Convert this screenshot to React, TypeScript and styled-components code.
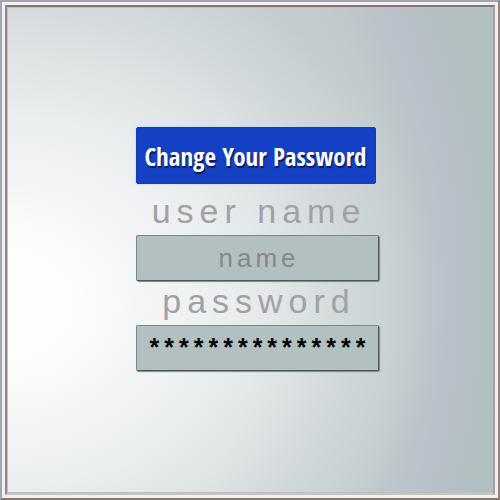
import React from "react";
import styled, { createGlobalStyle } from "styled-components";

const GlobalStyle = createGlobalStyle`
  * { box-sizing: border-box; }
  body { margin: 0; font-family: "Liberation Sans", Arial, sans-serif; }
`;

const Frame = styled.main`
  min-height: 100vh;
  display: flex;
  border: 2px solid;
  border-color: #a3a5b0 #94867f #85776f #a3a5b0;
  background: #f4efed;
  padding: 3px;
`;

const Panel = styled.div`
  flex: 1;
  display: flex;
  align-items: center;
  justify-content: center;
  padding: 0 0 2px 14px;
  border: 2px solid;
  border-color: #85786f #a0a2aa #c8c4c6 #91888a;
  box-shadow: inset 0 0 0 1px #b9c0c4;
  background:
    radial-gradient(
      ellipse 90% 76% at 0 61%,
      #ffffff 0%,
      rgba(255, 255, 255, 0.96) 14%,
      rgba(255, 255, 255, 0.62) 50%,
      rgba(255, 255, 255, 0.2) 80%,
      rgba(255, 255, 255, 0) 100%
    ),
    radial-gradient(
      ellipse 104% 130% at 0 58%,
      #cbd3d5 0%,
      #cad2d4 50%,
      #c2cbcc 76%,
      #b9c1ca 87%,
      #b2bfc1 98%
    );
`;

const Form = styled.form`
  width: 100%;
  max-width: 243px;
  display: flex;
  flex-direction: column;
`;

const TitleButton = styled.button`
  height: 57px;
  margin: 0 3px 7px 0;
  padding: 0;
  border: 1px solid #1a3bb0;
  border-radius: 2px;
  background: #1440c3;
  box-shadow: 0 0 3px #c3cdec;
  color: #ffffff;
  font: bold 25px "Open Sans Condensed", "Roboto Condensed", "Liberation Sans", sans-serif;
  text-shadow: 1px 2px 1px #0a1a55;
  white-space: nowrap;
`;

const Label = styled.label`
  padding-bottom: 3px;
  color: #a2a1a5;
  font-size: 34px;
  line-height: 41px;
  letter-spacing: 6px;
  text-indent: 4px;
  text-align: center;
  white-space: nowrap;
`;

const Field = styled.input<{ $masked?: boolean }>`
  width: 100%;
  height: 46px;
  padding: ${({ $masked }) => ($masked ? "0 0 2px 6px" : "0 0 0 4px")};
  border: 1px solid;
  border-color: #7c8787 #4a5555 #4a5555 #7c8787;
  border-radius: 2px;
  outline: none;
  background: #b3c0c1;
  box-shadow: 1px 1px 1px #7c8787;
  color: ${({ $masked }) => ($masked ? "#050505" : "#85888a")};
  font-family: inherit;
  font-size: ${({ $masked }) => ($masked ? 25 : 26)}px;
  font-weight: ${({ $masked }) => ($masked ? "bold" : "normal")};
  letter-spacing: ${({ $masked }) => ($masked ? 5 : 4)}px;
  text-align: center;
`;

export default function App() {
  return (
    <>
      <GlobalStyle />
      <Frame>
        <Panel>
          <Form onSubmit={(e) => e.preventDefault()}>
            <TitleButton type="submit">Change Your Password</TitleButton>
            <Label htmlFor="username">user name</Label>
            <Field id="username" type="text" defaultValue="name" />
            <Label htmlFor="password">password</Label>
            <Field
              id="password"
              type="text"
              autoComplete="off"
              defaultValue="***************"
              $masked
            />
          </Form>
        </Panel>
      </Frame>
    </>
  );
}
